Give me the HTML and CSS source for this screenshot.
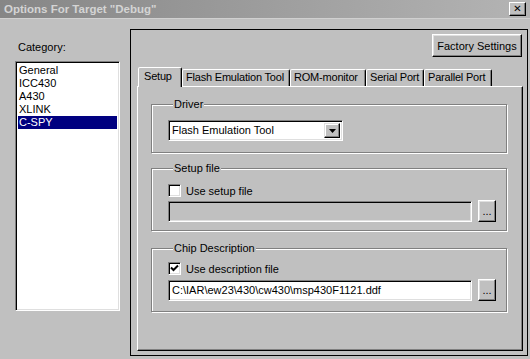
FILE: index.html
```html
<!DOCTYPE html>
<html lang="en">
<head>
    <meta charset="UTF-8">
    <title>Options For Target "Debug"</title>
    <link rel="stylesheet" href="styles.css">
</head>
<body>
<div class="window">
    <!-- Title bar -->
    <div class="titlebar">
        <span class="title">Options For Target "Debug"</span>
        <button class="close-btn">&#10005;</button>
    </div>

    <div class="dialog-body">
        <!-- Left: category list -->
        <div class="category">
            <div class="category-label">Category:</div>
            <ul class="listbox">
                <li>General</li>
                <li>ICC430</li>
                <li>A430</li>
                <li>XLINK</li>
                <li class="selected">C-SPY</li>
            </ul>
        </div>

        <!-- Right: options panel -->
        <div class="panel">
            <div class="panel-top">
                <button class="btn factory-btn">Factory Settings</button>
            </div>

            <div class="tabs">
                <div class="tab active tab-setup">Setup</div>
                <div class="tab tab-flash">Flash Emulation Tool</div>
                <div class="tab tab-rom">ROM-monitor</div>
                <div class="tab tab-serial">Serial Port</div>
                <div class="tab tab-parallel">Parallel Port</div>
            </div>

            <div class="tab-page">
                <fieldset class="group group-driver">
                    <legend>Driver</legend>
                    <div class="select">
                        <span class="select-text">Flash Emulation Tool</span>
                        <span class="select-arrow">
                            <svg width="7" height="4" viewBox="0 0 7 4"><path d="M0 0h7L3.5 4z" fill="#000"/></svg>
                        </span>
                    </div>
                </fieldset>

                <fieldset class="group group-setup">
                    <legend>Setup file</legend>
                    <label class="check-row">
                        <span class="checkbox"></span>
                        Use setup file
                    </label>
                    <div class="file-row">
                        <div class="field disabled"></div>
                        <button class="btn browse-btn">...</button>
                    </div>
                </fieldset>

                <fieldset class="group group-chip">
                    <legend>Chip Description</legend>
                    <label class="check-row">
                        <span class="checkbox">
                            <svg width="9" height="9" viewBox="0 0 9 9"><path d="M1 3.5l2.5 2.5L8 1.5" stroke="#000" stroke-width="2" fill="none"/></svg>
                        </span>
                        Use description file
                    </label>
                    <div class="file-row">
                        <div class="field">C:\IAR\ew23\430\cw430\msp430F1121.ddf</div>
                        <button class="btn browse-btn">...</button>
                    </div>
                </fieldset>
            </div>
        </div>
    </div>
</div>
</body>
</html>
```

FILE: styles.css
```css
* {
    margin: 0;
    padding: 0;
    box-sizing: border-box;
}

:root {
    --face: #c0c0c0;
    --shadow: #808080;
    --light: #dfdfdf;
    --white: #ffffff;
    --dark: #000000;
    --select-blue: #000080;
}

body {
    font-family: "Liberation Sans", Arial, sans-serif;
    font-size: 11px;
    color: #000;
    background-color: var(--face);
}

.window {
    width: 530px;
    height: 359px;
    background-color: var(--face);
    display: flex;
    flex-direction: column;
}

/* Title bar */
.titlebar {
    height: 19px;
    display: flex;
    align-items: center;
    justify-content: space-between;
    padding: 0 4px 0 4px;
    background: linear-gradient(to right, #868686, #b4b4b4);
    border-bottom: 1px solid #d0d0d0;
}

.title {
    font-family: "Liberation Sans", Arial, sans-serif;
    font-weight: bold;
    font-size: 11.5px;
    color: #d4d4d4;
}

.close-btn {
    width: 17px;
    height: 14px;
    font-size: 10px;
    font-weight: bold;
    line-height: 10px;
    background-color: var(--face);
    border: 1px solid;
    border-color: var(--white) var(--dark) var(--dark) var(--white);
    box-shadow: inset -1px -1px 0 var(--shadow);
    color: #000;
    font-family: "DejaVu Sans", sans-serif;
}

/* Dialog body */
.dialog-body {
    flex-grow: 1;
    display: flex;
    padding: 10px 2px 3px 15px;
}

.category {
    width: 105px;
    padding-top: 12px;
    margin-right: 10px;
}

.category-label {
    padding-left: 3px;
    height: 20px;
    line-height: 12px;
}

.listbox {
    list-style: none;
    height: 250px;
    background-color: var(--white);
    border: 1px solid;
    border-color: var(--shadow) var(--white) var(--white) var(--shadow);
    box-shadow: inset 1px 1px 0 var(--dark), inset -1px -1px 0 var(--light);
    padding: 2px;
}

.listbox li {
    height: 13px;
    line-height: 13px;
    padding-left: 1px;
}

.listbox li.selected {
    background-color: var(--select-blue);
    color: var(--white);
}

/* Options panel */
.panel {
    flex-grow: 1;
    border: 1px solid var(--dark);
    display: flex;
    flex-direction: column;
    padding: 0 4px 4px 6px;
}

.panel-top {
    display: flex;
    justify-content: flex-end;
    padding-top: 4px;
    height: 37px;
}

.btn {
    font-family: "Liberation Sans", Arial, sans-serif;
    font-size: 11px;
    background-color: var(--face);
    border: 1px solid;
    border-color: var(--white) var(--dark) var(--dark) var(--white);
    box-shadow: inset -1px -1px 0 var(--shadow), inset 1px 1px 0 var(--light);
    color: #000;
}

.factory-btn {
    width: 90px;
    height: 23px;
    margin-right: 1px;
}

/* Tabs */
.tabs {
    display: flex;
    align-items: flex-end;
    height: 19px;
    padding-left: 1px;
    position: relative;
    z-index: 1;
}

.tab {
    flex: none;
    height: 17px;
    padding-left: 3px;
    line-height: 15px;
    letter-spacing: -0.2px;
    white-space: nowrap;
    border: 1px solid;
    border-bottom: none;
    border-color: var(--white) var(--dark) transparent var(--white);
    box-shadow: inset -1px 0 0 var(--shadow);
    border-radius: 2px 2px 0 0;
    background-color: var(--face);
}

.tab.active {
    height: 20px;
    padding-left: 5px;
    line-height: 17px;
    margin-bottom: -1px;
}

.tab-setup { width: 44px; }
.tab-flash { width: 108px; }
.tab-rom { width: 76px; }
.tab-serial { width: 58px; }
.tab-parallel { width: 68px; }

.tab-page {
    flex-grow: 1;
    border: 1px solid;
    border-color: var(--white) var(--dark) var(--dark) var(--white);
    box-shadow: inset -1px -1px 0 var(--shadow);
    padding: 11px 15px 0 13px;
}

/* Group boxes */
.group {
    border: 1px solid var(--shadow);
    box-shadow: 1px 1px 0 var(--white), inset 1px 1px 0 var(--white);
    padding: 0 8px 0 16px;
}

.group legend {
    padding: 0 1px;
    margin-left: 5px;
    background-color: var(--face);
    line-height: 12px;
}

.group-driver {
    height: 55px;
    padding-top: 10px;
    margin-bottom: 9px;
}

.group-setup {
    height: 69px;
    padding-top: 9px;
    margin-bottom: 11px;
}

.group-setup .check-row {
    margin-bottom: 2px;
}

.group-chip {
    height: 70px;
    padding-top: 7px;
}

.group-chip .check-row {
    margin-bottom: 3px;
}

/* Drop-down */
.select {
    width: 175px;
    height: 21px;
    display: flex;
    background-color: var(--white);
    border: 1px solid;
    border-color: var(--shadow) var(--white) var(--white) var(--shadow);
    box-shadow: inset 1px 1px 0 var(--dark), inset -1px -1px 0 var(--light);
    padding: 2px 2px 2px 3px;
}

.select-text {
    flex-grow: 1;
    line-height: 15px;
}

.select-arrow {
    width: 16px;
    background-color: var(--face);
    border: 1px solid;
    border-color: var(--light) var(--dark) var(--dark) var(--light);
    box-shadow: inset -1px -1px 0 var(--shadow), inset 1px 1px 0 var(--white);
    display: flex;
    align-items: center;
    justify-content: center;
}

/* Checkbox rows */
.check-row {
    display: flex;
    align-items: center;
    gap: 5px;
    height: 15px;
}

.checkbox {
    width: 13px;
    height: 13px;
    background-color: var(--white);
    border: 1px solid;
    border-color: var(--shadow) var(--white) var(--white) var(--shadow);
    box-shadow: inset 1px 1px 0 var(--dark), inset -1px -1px 0 var(--light);
    display: flex;
    align-items: center;
    justify-content: center;
}

/* File path rows */
.file-row {
    display: flex;
    align-items: center;
    gap: 6px;
}

.field {
    width: 304px;
    height: 21px;
    background-color: var(--white);
    border: 1px solid;
    border-color: var(--shadow) var(--white) var(--white) var(--shadow);
    box-shadow: inset 1px 1px 0 var(--dark), inset -1px -1px 0 var(--light);
    padding: 2px 3px;
    line-height: 15px;
}

.field.disabled {
    background-color: var(--face);
}

.browse-btn {
    width: 18px;
    height: 22px;
    line-height: 14px;
    padding: 0;
}
```
